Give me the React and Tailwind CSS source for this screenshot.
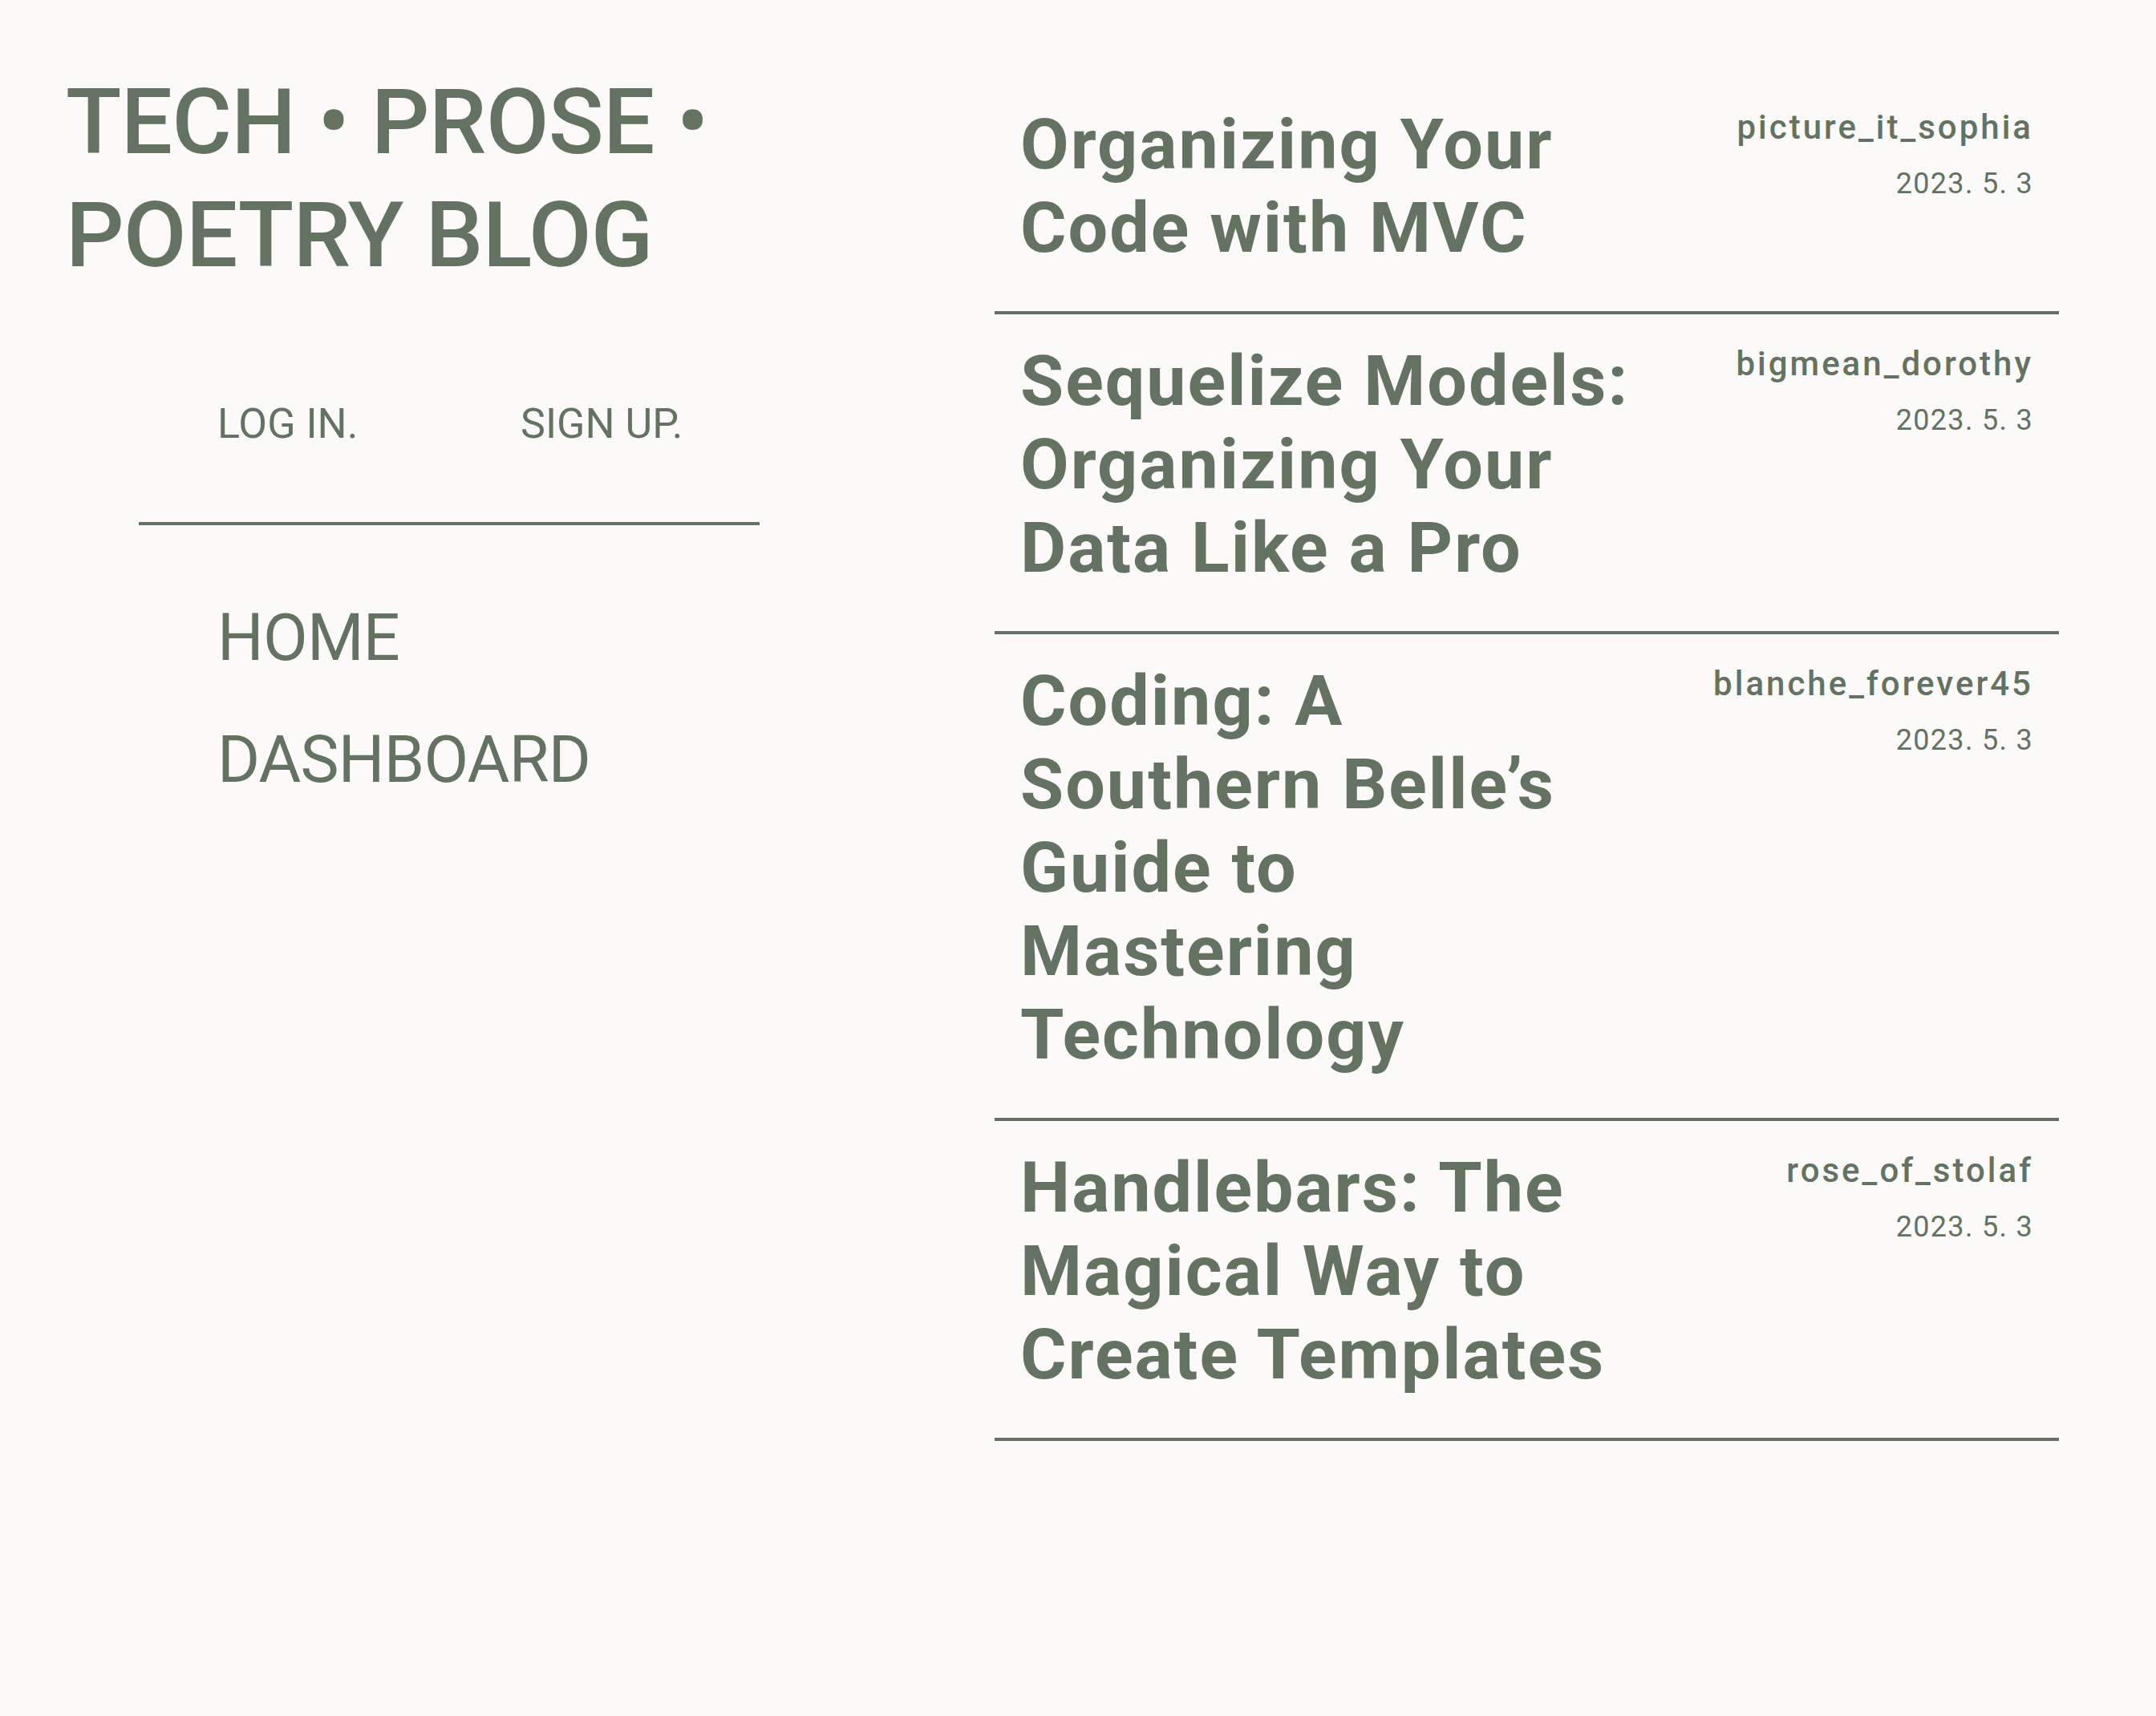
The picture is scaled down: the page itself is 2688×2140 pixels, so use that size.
const posts = [
  {
    title: ['Organizing Your', 'Code with MVC'],
    author: 'picture_it_sophia',
    date: '2023. 5. 3',
  },
  {
    title: ['Sequelize Models:', 'Organizing Your', 'Data Like a Pro'],
    author: 'bigmean_dorothy',
    date: '2023. 5. 3',
  },
  {
    title: ['Coding: A', 'Southern Belle\u2019s', 'Guide to', 'Mastering', 'Technology'],
    author: 'blanche_forever45',
    date: '2023. 5. 3',
  },
  {
    title: ['Handlebars: The', 'Magical Way to', 'Create Templates'],
    author: 'rose_of_stolaf',
    date: '2023. 5. 3',
  },
]

function PostRow({ post }) {
  return (
    <article className="flex justify-between items-start border-b-4 border-[#637261] pt-[31px] pb-[52px] pl-[32px] pr-[32px]">
      <h2 className="text-[88px] leading-[104px] font-bold tracking-[2px]">
        {post.title.map((line) => (
          <span key={line} className="block whitespace-nowrap">
            {line}
          </span>
        ))}
      </h2>
      <div className="flex flex-col items-end text-right">
        <span className="text-[42px] leading-[62px] font-medium tracking-[3px]">{post.author}</span>
        <span className="text-[36px] leading-[56px] mt-[11px] tracking-[1.3px]">{post.date}</span>
      </div>
    </article>
  )
}

export default function App() {
  return (
    <div className="min-h-screen w-full flex bg-[#fbfaf8] text-[#637261] font-['Roboto',sans-serif]">
      <aside className="w-[1240px] shrink-0 pl-[82px] pt-[82px]">
        <h1 className="text-[114px] leading-[141px] font-medium tracking-[-0.7px]">
          TECH • PROSE •
          <br />
          POETRY BLOG
        </h1>
        <div className="ml-[91px] w-[774px] mt-[134px] border-b-4 border-[#637261] pb-[91px]">
          <div className="flex pl-[98px] text-[52px] leading-[62px]">
            <a className="w-[378px]">LOG IN.</a>
            <a>SIGN UP.</a>
          </div>
        </div>
        <nav className="ml-[189px] mt-[65px] flex flex-col text-[81px] leading-[152px] tracking-[-0.8px]">
          <a>HOME</a>
          <a>DASHBOARD</a>
        </nav>
      </aside>
      <main className="w-[1327px] shrink-0 pt-[97px]">
        {posts.map((post) => (
          <PostRow key={post.author} post={post} />
        ))}
      </main>
    </div>
  )
}
